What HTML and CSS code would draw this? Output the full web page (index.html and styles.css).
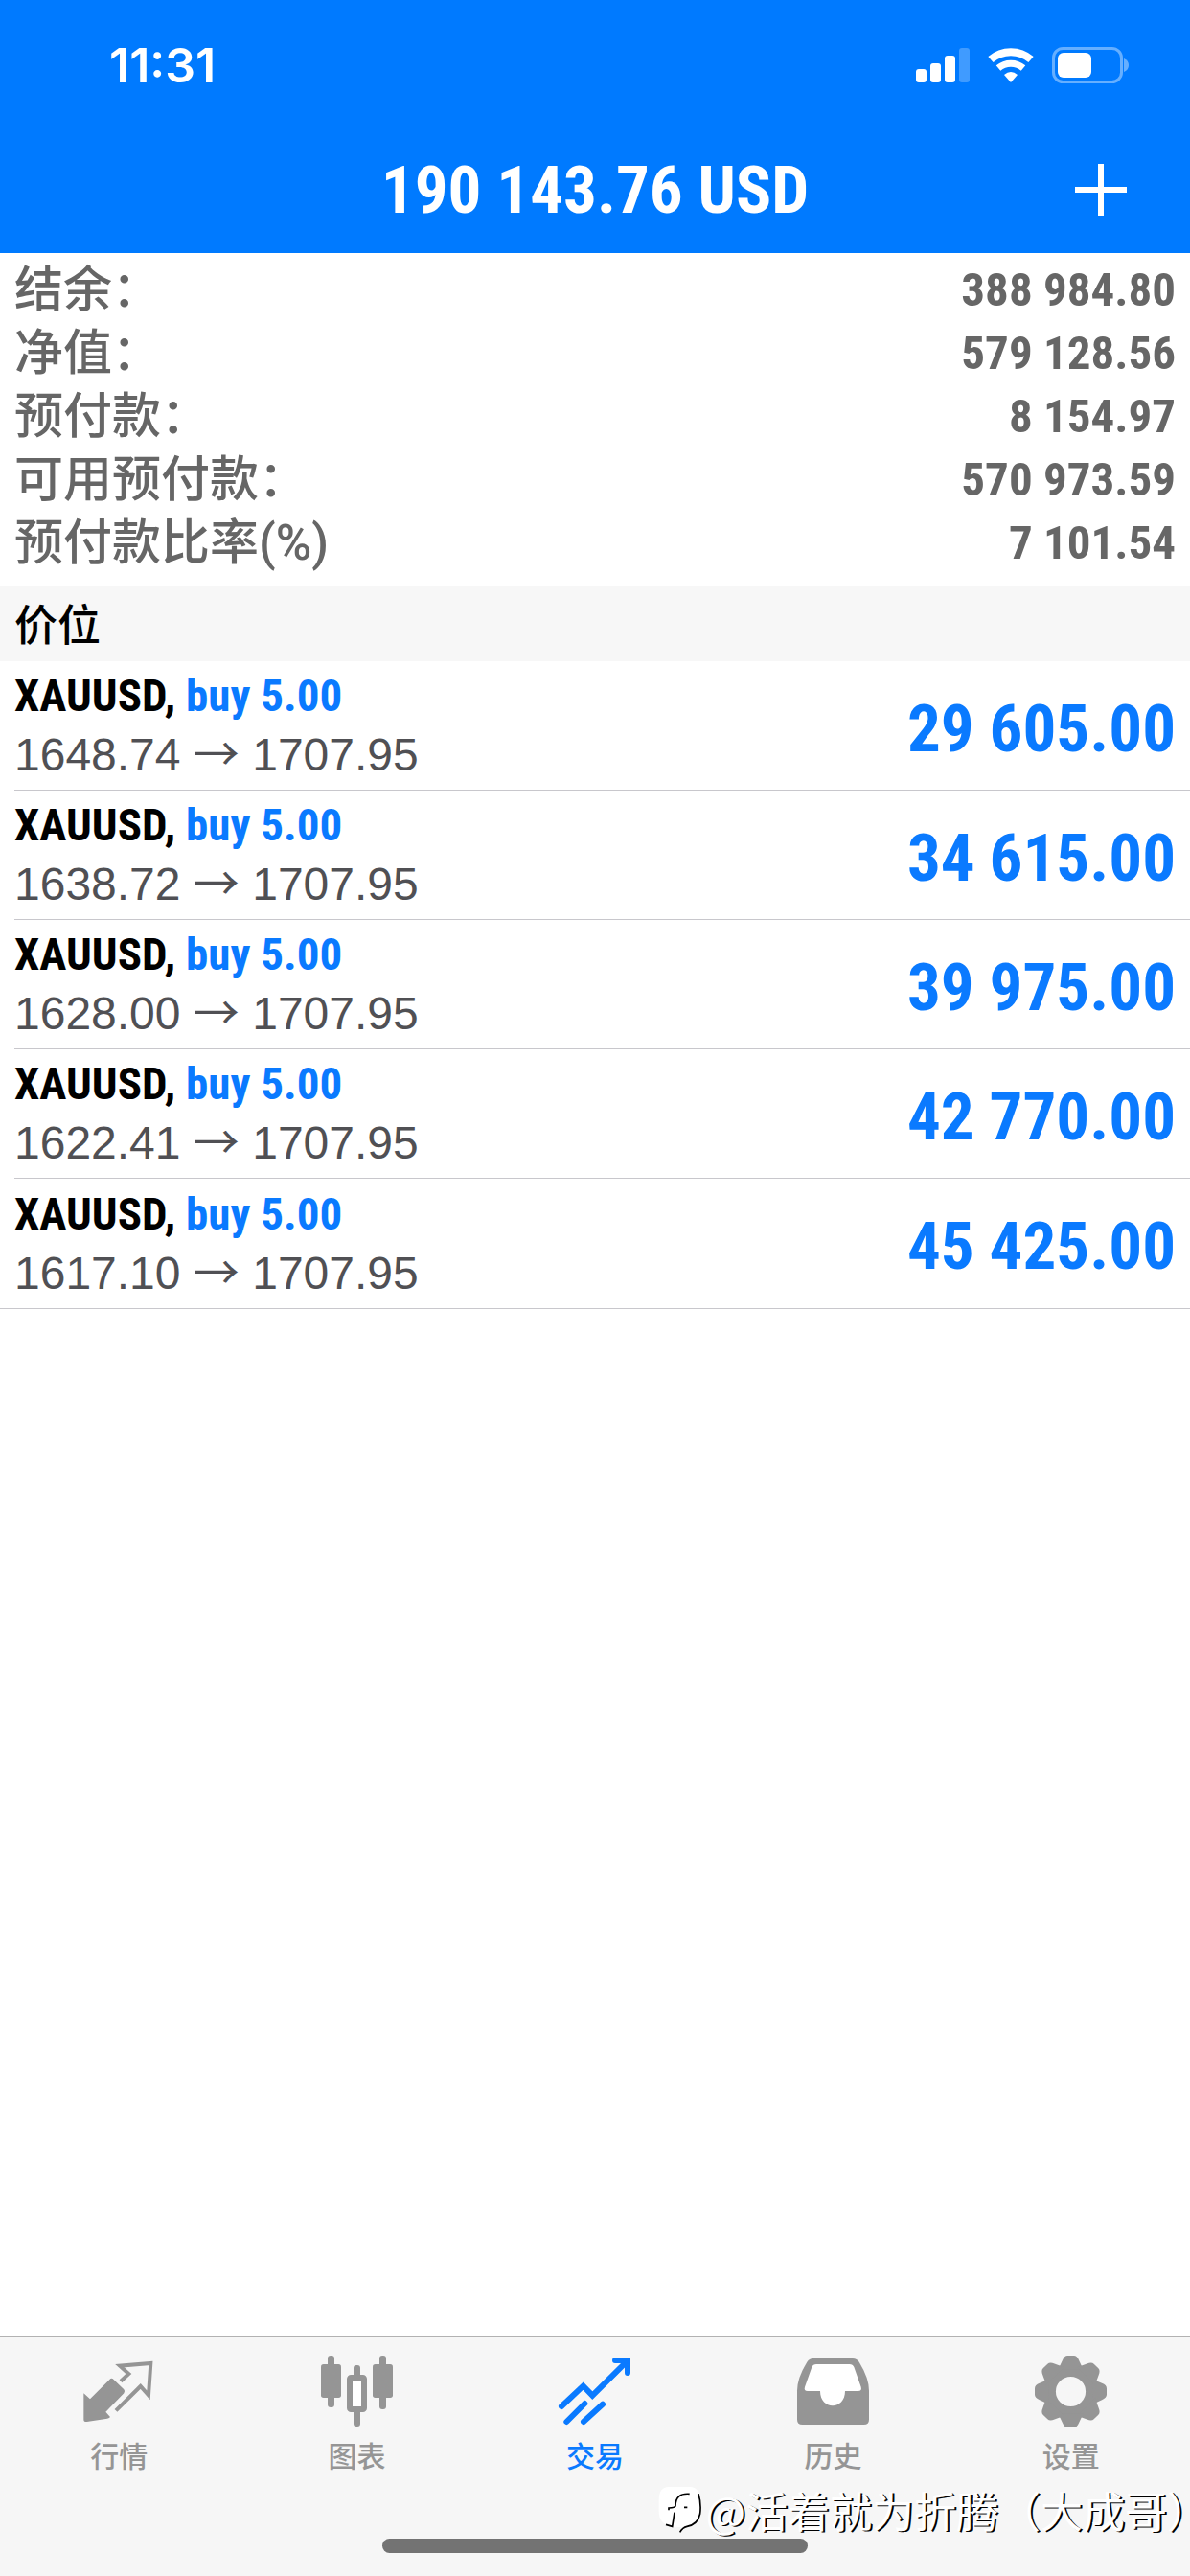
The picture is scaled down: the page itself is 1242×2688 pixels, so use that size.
FILE: index.html
```html
<!DOCTYPE html>
<html lang="zh-CN">
<head>
  <meta charset="UTF-8">
  <meta name="viewport" content="width=device-width, initial-scale=1.0">
  <title>交易</title>
  <link rel="stylesheet" href="styles.css">
</head>
<body>
  <header class="header">
    <div class="status-bar">
      <span class="time">11:31</span>
      <div class="status-icons">
        <svg width="56" height="36" viewBox="0 0 56 36" fill="#fff">
          <rect x="0" y="22" width="11" height="14" rx="3"/>
          <rect x="15" y="16" width="11" height="20" rx="3"/>
          <rect x="30" y="8" width="11" height="28" rx="3"/>
          <rect x="45" y="0" width="11" height="36" rx="3" opacity="0.25"/>
        </svg>
        <svg width="48" height="36" viewBox="0 0 48 36" fill="none" stroke="#fff" stroke-width="8">
          <path d="M3 12A32 32 0 0 1 45 12"/>
          <path d="M11 21A20 20 0 0 1 37 21" stroke-width="7"/>
          <path d="M24 36L17 28Q24 22 31 28Z" fill="#fff" stroke="none"/>
        </svg>
        <svg width="80" height="38" viewBox="0 0 80 38">
          <rect x="1.500" y="1.500" width="71" height="35" rx="10" fill="none" stroke="#fff" stroke-width="3" opacity="0.4"/>
          <rect x="6" y="6" width="35" height="26" rx="6" fill="#fff"/>
          <path d="M75 12Q80 14 80 19T75 26Z" fill="#fff" opacity="0.4"/>
        </svg>
      </div>
    </div>
    <div class="title-bar">
      <h1 class="title">190 143.76 USD</h1>
      <button class="add-button" type="button" aria-label="新订单">
        <svg width="56" height="56" viewBox="0 0 56 56" stroke="#fff" stroke-width="6">
          <path d="M28 1V55M1 28H55"/>
        </svg>
      </button>
    </div>
  </header>
  <main class="content">
    <!-- Account summary -->
    <dl class="summary">
      <div class="summary-row"><dt>结余：</dt><dd>388 984.80</dd></div>
      <div class="summary-row"><dt>净值：</dt><dd>579 128.56</dd></div>
      <div class="summary-row"><dt>预付款：</dt><dd>8 154.97</dd></div>
      <div class="summary-row"><dt>可用预付款：</dt><dd>570 973.59</dd></div>
      <div class="summary-row"><dt>预付款比率(%)</dt><dd>7 101.54</dd></div>
    </dl>
    <!-- Open positions -->
    <h2 class="section-title">价位</h2>
    <ul class="positions">
      <li class="position">
        <div class="position-info">
          <p class="symbol">XAUUSD, <span class="buy">buy 5.00</span></p>
          <p class="prices">1648.74 <span class="arrow">→</span> 1707.95</p>
        </div>
        <span class="profit">29 605.00</span>
      </li>
      <li class="position">
        <div class="position-info">
          <p class="symbol">XAUUSD, <span class="buy">buy 5.00</span></p>
          <p class="prices">1638.72 <span class="arrow">→</span> 1707.95</p>
        </div>
        <span class="profit">34 615.00</span>
      </li>
      <li class="position">
        <div class="position-info">
          <p class="symbol">XAUUSD, <span class="buy">buy 5.00</span></p>
          <p class="prices">1628.00 <span class="arrow">→</span> 1707.95</p>
        </div>
        <span class="profit">39 975.00</span>
      </li>
      <li class="position">
        <div class="position-info">
          <p class="symbol">XAUUSD, <span class="buy">buy 5.00</span></p>
          <p class="prices">1622.41 <span class="arrow">→</span> 1707.95</p>
        </div>
        <span class="profit">42 770.00</span>
      </li>
      <li class="position">
        <div class="position-info">
          <p class="symbol">XAUUSD, <span class="buy">buy 5.00</span></p>
          <p class="prices">1617.10 <span class="arrow">→</span> 1707.95</p>
        </div>
        <span class="profit">45 425.00</span>
      </li>
    </ul>
  </main>
  <footer class="footer">
    <nav class="tabs">
      <a class="tab" href="#quotes">
        <svg class="tab-icon" viewBox="260 114 225 225">
          <path d="M261 232L281 250L342 189Q348 182 355 189L387 220Q392 226 387 232L330 290L344 306Q342 310 335 311L271 321Q261 322 261 314Z" fill="currentColor"/>
          <path d="M377 194L402 171L374 146L471 138L464 238L439 210L362 286" fill="none" stroke="currentColor" stroke-width="12"/>
        </svg>
        行情
      </a>
      <a class="tab" href="#chart">
        <svg class="tab-icon" viewBox="1005 114 225 225" fill="currentColor">
          <rect x="1005" y="141" width="63" height="105" rx="8"/>
          <rect x="1026" y="114" width="21" height="162" rx="9"/>
          <rect x="1167" y="141" width="63" height="105" rx="8"/>
          <rect x="1188" y="114" width="21" height="168" rx="9"/>
          <rect x="1107" y="144" width="21" height="40" rx="9"/>
          <rect x="1107" y="282" width="21" height="54" rx="9"/>
          <rect x="1095" y="183" width="45" height="99" rx="4" fill="#fff" stroke="currentColor" stroke-width="18"/>
        </svg>
        图表
      </a>
      <a class="tab active" href="#trade">
        <svg class="tab-icon" viewBox="546 114 225 225" fill="none" stroke="currentColor" stroke-width="18" stroke-linecap="round">
          <path d="M555 273L623 209L652 239L758 134"/>
          <path d="M723 129H762V168"/>
          <path d="M750 126H766V150Z" fill="currentColor" stroke-width="6"/>
          <path d="M571 321L628 264M624 321L684 266"/>
        </svg>
        交易
      </a>
      <a class="tab" href="#history">
        <svg class="tab-icon" viewBox="84 114 225 225" fill="currentColor">
          <path d="M134 123H258Q271 123 278 134Q309 184 309 224V314Q309 330 293 330H100Q84 330 84 314V224Q84 184 115 134Q122 123 134 123Z"/>
          <path d="M144 141H248Q258 141 262 150L284 212Q288 225 274 225H234C234 286 156 286 156 225H117Q104 225 108 212L130 150Q134 141 144 141Z" fill="#fff"/>
        </svg>
        历史
      </a>
      <a class="tab" href="#settings">
        <svg class="tab-icon" viewBox="-113 -113 226 226" fill="currentColor">
          <defs>
            <path id="tooth" d="M-40 -70Q-32 -84 -26 -98Q-20 -113 -10 -113H10Q20 -113 26 -98Q32 -84 40 -70Z"/>
          </defs>
          <circle r="66" fill="none" stroke="currentColor" stroke-width="38"/>
          <use href="#tooth"/>
          <use href="#tooth" transform="rotate(45)"/>
          <use href="#tooth" transform="rotate(90)"/>
          <use href="#tooth" transform="rotate(135)"/>
          <use href="#tooth" transform="rotate(180)"/>
          <use href="#tooth" transform="rotate(225)"/>
          <use href="#tooth" transform="rotate(270)"/>
          <use href="#tooth" transform="rotate(315)"/>
        </svg>
        设置
      </a>
    </nav>
    <div class="home-indicator"></div>
    <div class="watermark">
      <svg width="45" height="49" viewBox="22 28 135 147">
        <path d="M55 28H122Q150 28 154 70V110Q152 150 112 154L90 172L94 154L66 153Q24 145 24 105V70Q24 28 55 28Z" fill="#fff"/>
        <path d="M148 50Q157 80 153 112Q146 146 112 152Q98 155 90 170" fill="none" stroke="#000" stroke-width="5"/>
        <path d="M120 50Q76 46 76 88Q74 93 55 94V101M73 108L66 152L46 146M103 92H113" fill="none" stroke="#000" stroke-width="5"/>
      </svg>
      <span>@活着就为折腾（大成哥）</span>
    </div>
  </footer>
</body>
</html>
```

FILE: styles.css
```css
* {
  box-sizing: border-box;
}
body {
  margin: 0;
  min-height: 100vh;
  display: flex;
  flex-direction: column;
  font-family: "Liberation Sans", "Noto Sans CJK SC", sans-serif;
  background-color: #ffffff;
  color: #000000;
}
h1, h2, p, ul, dl, dd {
  margin: 0;
  padding: 0;
}
.header {
  background-color: #007aff;
  color: #ffffff;
}
.status-bar {
  display: flex;
  justify-content: space-between;
  align-items: center;
  height: 132px;
  padding: 4px 64px 0 114px;
}
.time {
  font-family: Inter, sans-serif;
  font-size: 50px;
  font-weight: 600;
}
.status-icons {
  display: flex;
  align-items: center;
  gap: 19px;
}
.title-bar {
  display: grid;
  grid-template-columns: 1fr auto 1fr;
  align-items: center;
  height: 132px;
  padding: 0 65px;
}
.title {
  grid-column: 2;
  font-size: 69px;
}
.title, .summary dd, .symbol, .profit {
  font-family: "Roboto Condensed", "Liberation Sans", sans-serif;
  font-weight: bold;
}
.add-button {
  justify-self: end;
  display: flex;
  padding: 0;
  border: none;
  background: none;
}
.content {
  flex: 1;
}
.summary {
  padding: 6px 15px 12px;
  color: #666666;
}
.summary-row {
  display: flex;
  justify-content: space-between;
  height: 66px;
  line-height: 66px;
}
.summary dt {
  font-family: Roboto, "Noto Sans CJK SC", sans-serif;
  font-size: 51px;
  font-weight: 500;
}
.summary dd {
  font-size: 49px;
}
.section-title {
  padding: 0 15px 2px;
  background-color: #f7f7f7;
  font-family: "Noto Sans CJK SC", sans-serif;
  font-size: 45px;
  font-weight: 500;
  line-height: 76px;
}
.positions {
  list-style: none;
  border-bottom: 1px solid #c8c7cc;
}
.position {
  display: flex;
  justify-content: space-between;
  align-items: center;
  height: 135px;
  margin-left: 15px;
  padding-right: 15px;
  border-bottom: 1px solid #c8c7cc;
}
.position:last-child {
  border-bottom: none;
}
.symbol {
  font-size: 47px;
  line-height: 62px;
}
.buy, .profit {
  color: #0a7aff;
}
.prices {
  color: #505054;
  font-size: 48px;
  line-height: 62px;
}
.arrow {
  font-family: "Noto Sans CJK SC", sans-serif;
  line-height: 1;
}
.profit {
  padding-top: 6px;
  font-size: 69px;
}
.footer {
  position: relative;
  overflow: hidden;
  padding: 19px 0 24px;
  background-color: #f6f6f6;
  border-top: 1px solid #b2b2b2;
}
.tabs {
  display: grid;
  grid-template-columns: repeat(5, 1fr);
}
.tab {
  display: flex;
  flex-direction: column;
  align-items: center;
  gap: 10px;
  color: #959595;
  font-family: "Noto Sans CJK SC", sans-serif;
  font-size: 30px;
  font-weight: 500;
  line-height: 36px;
  text-decoration: none;
}
.tab.active {
  color: #0a7aff;
}
.tab-icon {
  width: 75px;
  height: 75px;
  overflow: visible;
}
.home-indicator {
  width: 444px;
  height: 15px;
  margin: 70px auto 0;
  border-radius: 8px;
  background-color: #737373;
}
.watermark {
  position: absolute;
  right: -20px;
  bottom: 40px;
  display: flex;
  align-items: center;
  gap: 4px;
  color: #ffffff;
  font-family: "Noto Sans CJK SC", sans-serif;
  font-size: 44px;
  line-height: 58px;
  text-shadow: 2px 1px 0 #000000;
  white-space: nowrap;
}
```
